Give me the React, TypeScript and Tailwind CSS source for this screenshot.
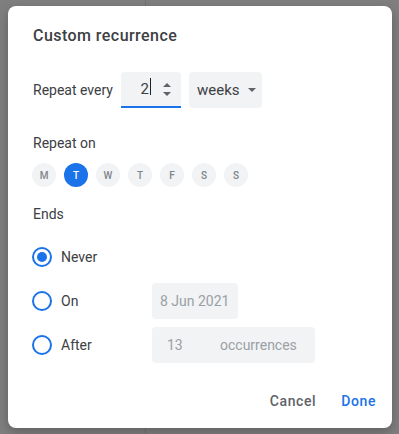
import { useState } from "react";

const DAYS = ["M", "T", "W", "T", "F", "S", "S"];

function Radio({ checked }: { checked: boolean }) {
  return (
    <span className="flex h-5 w-5 shrink-0 items-center justify-center rounded-full border-2 border-[#1a73e8]">
      {checked && <span className="h-[10px] w-[10px] rounded-full bg-[#1a73e8]" />}
    </span>
  );
}

function EndOption({ label, checked, children }: { label: string; checked?: boolean; children?: React.ReactNode }) {
  return (
    <div className="flex h-9 items-center">
      <div className="flex w-[120px] items-center gap-[9px]">
        <Radio checked={!!checked} />
        <span>{label}</span>
      </div>
      {children}
    </div>
  );
}

export default function App() {
  const [selected] = useState(1);

  return (
    <div
      className="h-[434px] w-[399px] bg-[#7f7f7f] bg-[linear-gradient(to_right,transparent_145px,#737373_145px,#737373_146px,transparent_146px)] pl-2 pt-[6px] text-[14px] text-[#3c4043]"
      style={{ fontFamily: "Roboto, 'Noto Sans', Arial, sans-serif" }}
    >
      <div className="flex h-[422px] w-[384px] flex-col rounded-lg bg-white pl-6 pr-2 pt-[18px] shadow-[0_4px_12px_rgba(0,0,0,0.25)]">
        {/* Title */}
        <h2 className="pl-px text-[16px] leading-6 font-medium tracking-[0.45px] text-[#3c4043]">Custom recurrence</h2>

        {/* Repeat every */}
        <div className="mt-6 flex h-9 items-center">
          <span className="w-[89px] pl-px">Repeat every</span>
          <div className="flex h-9 w-[60px] items-center rounded-t bg-[#f1f3f4] border-b-2 border-[#1a73e8]">
            <span className="flex w-[30px] justify-end text-[15px]">
              2<span className="ml-px h-[17px] w-px bg-[#202124]" />
            </span>
            <span className="ml-[12px] flex flex-col gap-[5px]">
              <span className="h-0 w-0 border-x-[4px] border-b-[4px] border-x-transparent border-b-[#5f6368]" />
              <span className="h-0 w-0 border-x-[4px] border-t-[4px] border-x-transparent border-t-[#5f6368]" />
            </span>
          </div>
          <div className="ml-2 flex h-9 w-[73px] items-center rounded bg-[#f1f3f4] pl-2">
            <span className="text-[15px]">weeks</span>
            <span className="ml-[8px] h-0 w-0 border-x-[4px] border-t-[4px] border-x-transparent border-t-[#5f6368]" />
          </div>
        </div>

        {/* Repeat on */}
        <div className="mt-[25px] pl-px leading-5">Repeat on</div>
        <div className="mt-[10px] flex gap-2">
          {DAYS.map((d, i) => (
            <span
              key={i}
              className={`flex h-6 w-6 items-center justify-center rounded-full text-[10px] font-medium ${
                i === selected ? "bg-[#1a73e8] text-white" : "bg-[#f1f3f4] text-[#80868b]"
              }`}
            >
              {d}
            </span>
          ))}
        </div>

        {/* Ends */}
        <div className="mt-[17px] pl-px leading-5">Ends</div>
        <div className="mt-[15px] flex flex-col gap-2">
          <EndOption label="Never" checked />
          <EndOption label="On">
            <div className="flex h-9 w-[86px] items-center rounded bg-[#f1f3f4] pl-2 text-[#9aa0a6]">8 Jun 2021</div>
          </EndOption>
          <EndOption label="After">
            <div className="flex h-9 w-[163px] items-center rounded bg-[#f1f3f4] pl-[15px] text-[#9aa0a6]">
              <span className="w-[53px]">13</span>
              <span>occurrences</span>
            </div>
          </EndOption>
        </div>

        {/* Actions */}
        <div className="mt-5 flex justify-end gap-[9px]">
          <button className="h-9 px-2 font-medium tracking-[0.6px] text-[#5f6368]">Cancel</button>
          <button className="h-9 px-2 font-medium tracking-[0.6px] text-[#1a73e8]">Done</button>
        </div>
      </div>
    </div>
  );
}
